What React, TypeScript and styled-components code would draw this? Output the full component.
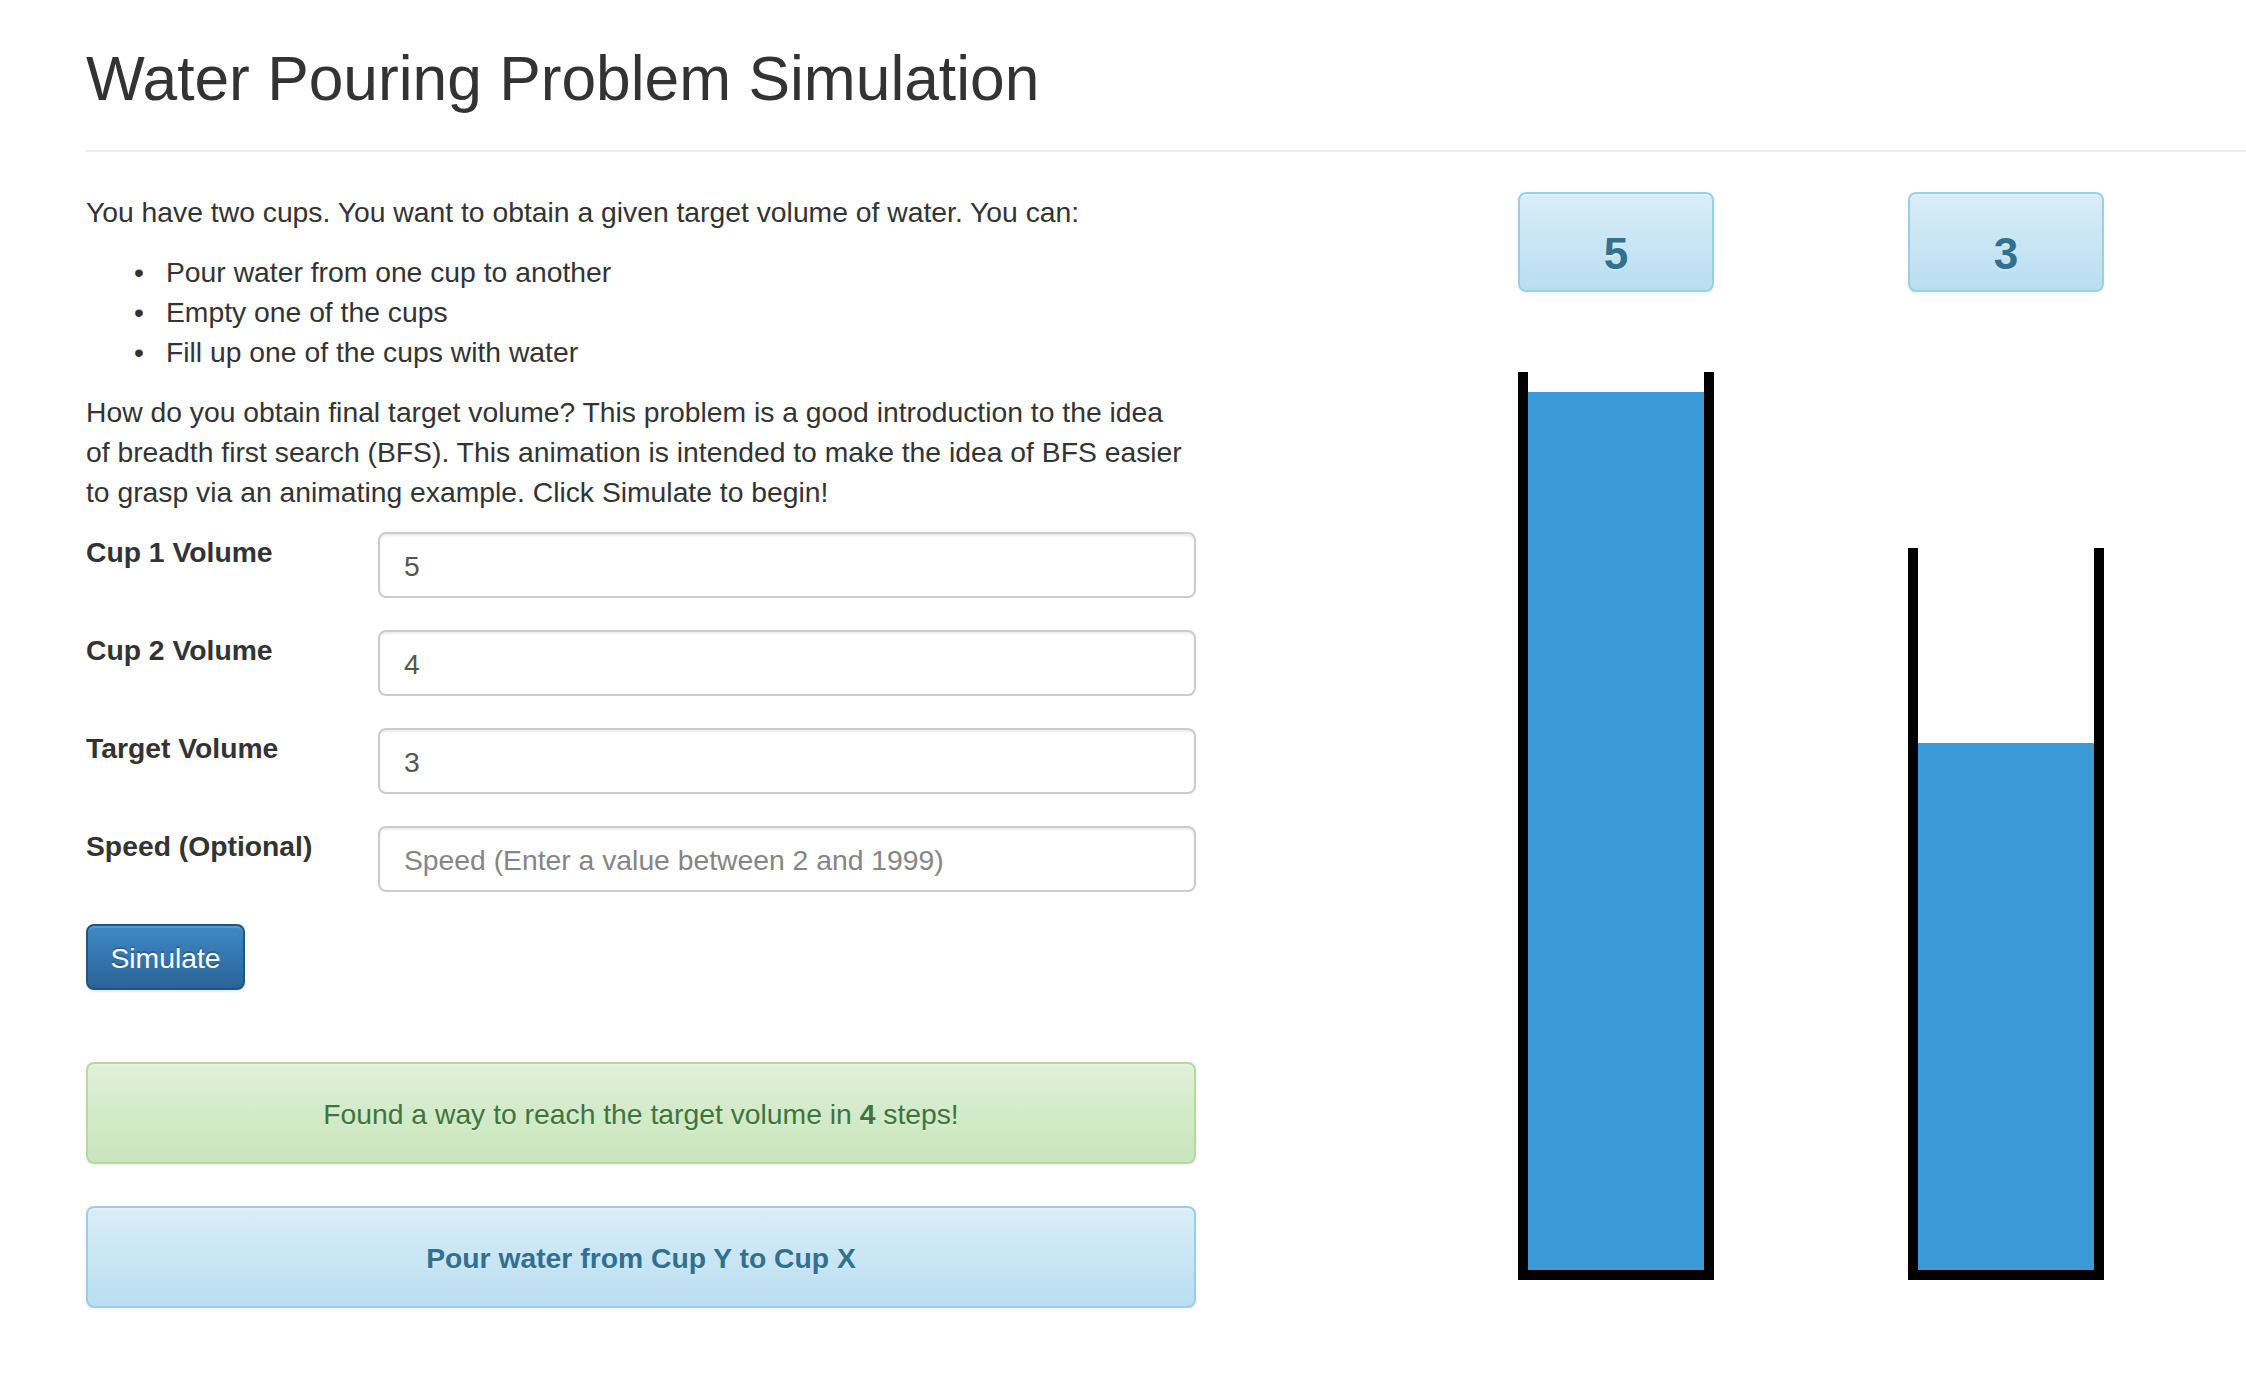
import React from "react";
import styled, { createGlobalStyle } from "styled-components";

const GlobalStyle = createGlobalStyle`
  html, body { margin: 0; padding: 0; background: #fff; }
  body {
    font-family: "Liberation Sans", Arial, Helvetica, sans-serif;
    font-size: 28.3px;
    line-height: 40px;
    color: #333;
  }
  * { box-sizing: border-box; }
`;

const Page = styled.div`
  padding-left: 86px;
  width: 2246px;
`;

const Header = styled.header`
  padding-top: 45px;
  padding-bottom: 37px;
  border-bottom: 2px solid #eee;
`;

const Title = styled.h1`
  margin: 0;
  font-size: 62.3px;
  line-height: 68px;
  font-weight: 500;
  color: #333;
`;

const Content = styled.div`
  display: grid;
  grid-template-columns: 1110px 1fr;
  margin-top: 40px;
`;

const LeftColumn = styled.div`
  display: flex;
  flex-direction: column;
`;

const Paragraph = styled.p`
  margin: 0 0 20px;
  max-width: 1100px;
`;

const List = styled.ul`
  margin: 0 0 20px;
  padding-left: 80px;
  list-style: none;
`;

const ListItem = styled.li`
  &::before {
    content: "•";
    display: inline-block;
    width: 32px;
    margin-left: -32px;
  }
`;

const Form = styled.form`
  display: flex;
  flex-direction: column;
  gap: 32px;
`;

const FormRow = styled.div`
  display: grid;
  grid-template-columns: 292px 818px;
  align-items: start;
`;

const Label = styled.label`
  font-weight: 700;
  line-height: 40px;
  margin-top: 0;
`;

const Input = styled.input`
  height: 66px;
  width: 100%;
  padding: 3px 24px 0;
  border: 2px solid #ccc;
  border-radius: 8px;
  font-family: inherit;
  font-size: 28.3px;
  color: #555;
  background: #fff;
  box-shadow: inset 0 2px 2px rgba(0, 0, 0, 0.075);
  outline: none;
  &::placeholder { color: #858585; }
`;

const Button = styled.button`
  align-self: flex-start;
  width: 159px;
  height: 66px;
  padding: 3px 0 0;
  border: 2px solid #245580;
  border-radius: 8px;
  background-image: linear-gradient(to bottom, #3f88c6 0%, #2a6496 100%);
  color: #fff;
  font-family: inherit;
  font-size: 28.3px;
  text-shadow: 0 -2px 0 rgba(0, 0, 0, 0.2);
  box-shadow: inset 0 2px 0 rgba(255, 255, 255, 0.15), 0 2px 2px rgba(0, 0, 0, 0.075);
  cursor: pointer;
`;

const Alert = styled.div<{ $variant: "success" | "info"; $gap: number }>`
  margin-top: ${(p) => p.$gap}px;
  height: 102px;
  display: flex;
  align-items: center;
  justify-content: center;
  padding-top: 2px;
  border-radius: 8px;
  border: 2px solid ${(p) => (p.$variant === "success" ? "#b2dba1" : "#9acfea")};
  background-image: ${(p) =>
    p.$variant === "success"
      ? "linear-gradient(to bottom, #dff0d8 0%, #c8e5bc 100%)"
      : "linear-gradient(to bottom, #d9edf7 0%, #b9def0 100%)"};
  color: ${(p) => (p.$variant === "success" ? "#3c763d" : "#31708f")};
  font-weight: ${(p) => (p.$variant === "info" ? 700 : 400)};
  text-shadow: 0 2px 0 rgba(255, 255, 255, 0.2);
  box-shadow: inset 0 2px 0 rgba(255, 255, 255, 0.25), 0 2px 4px rgba(0, 0, 0, 0.05);
`;

const RightColumn = styled.div`
  display: flex;
  gap: 194px;
  padding-left: 322px;
`;

const CupColumn = styled.div`
  width: 196px;
  display: flex;
  flex-direction: column;
`;

const CupLabel = styled.div`
  height: 100px;
  display: flex;
  align-items: center;
  justify-content: center;
  padding-top: 24px;
  border: 2px solid #9acfea;
  border-radius: 8px;
  background-image: linear-gradient(to bottom, #d9edf7 0%, #b9def0 100%);
  color: #31708f;
  font-size: 44px;
  font-weight: 700;
  text-shadow: 0 2px 0 rgba(255, 255, 255, 0.2);
  box-shadow: inset 0 2px 0 rgba(255, 255, 255, 0.25), 0 2px 4px rgba(0, 0, 0, 0.05);
`;

const CupArea = styled.div`
  height: 988px;
  display: flex;
  align-items: flex-end;
`;

const Cup = styled.div`
  width: 196px;
  display: flex;
  flex-direction: column;
  justify-content: flex-end;
  border: 10px solid #000;
  border-top: none;
`;

const Water = styled.div`
  width: 100%;
  background: #3b99d8;
`;

const UNIT = 175.6;

const cups = [
  { capacity: 5, amount: 5 },
  { capacity: 4, amount: 3 },
];

export default function App() {
  return (
    <>
      <GlobalStyle />
      <Page>
        <Header>
          <Title>Water Pouring Problem Simulation</Title>
        </Header>
        <Content>
          <LeftColumn>
            <Paragraph>
              You have two cups. You want to obtain a given target volume of water. You can:
            </Paragraph>
            <List>
              <ListItem>Pour water from one cup to another</ListItem>
              <ListItem>Empty one of the cups</ListItem>
              <ListItem>Fill up one of the cups with water</ListItem>
            </List>
            <Paragraph>
              How do you obtain final target volume? This problem is a good introduction to the idea
              of breadth first search (BFS). This animation is intended to make the idea of BFS easier
              to grasp via an animating example. Click Simulate to begin!
            </Paragraph>
            <Form onSubmit={(e) => e.preventDefault()}>
              <FormRow>
                <Label>Cup 1 Volume</Label>
                <Input defaultValue="5" />
              </FormRow>
              <FormRow>
                <Label>Cup 2 Volume</Label>
                <Input defaultValue="4" />
              </FormRow>
              <FormRow>
                <Label>Target Volume</Label>
                <Input defaultValue="3" />
              </FormRow>
              <FormRow>
                <Label>Speed (Optional)</Label>
                <Input placeholder="Speed (Enter a value between 2 and 1999)" />
              </FormRow>
              <Button type="submit">Simulate</Button>
            </Form>
            <Alert $variant="success" $gap={72}>
              <span>
                Found a way to reach the target volume in <b>4</b> steps!
              </span>
            </Alert>
            <Alert $variant="info" $gap={42}>
              Pour water from Cup Y to Cup X
            </Alert>
          </LeftColumn>
          <RightColumn>
            {cups.map((c, i) => (
              <CupColumn key={i}>
                <CupLabel>{c.amount}</CupLabel>
                <CupArea>
                  <Cup style={{ height: c.capacity * UNIT + 30 }}>
                    <Water style={{ height: c.amount * UNIT }} />
                  </Cup>
                </CupArea>
              </CupColumn>
            ))}
          </RightColumn>
        </Content>
      </Page>
    </>
  );
}
